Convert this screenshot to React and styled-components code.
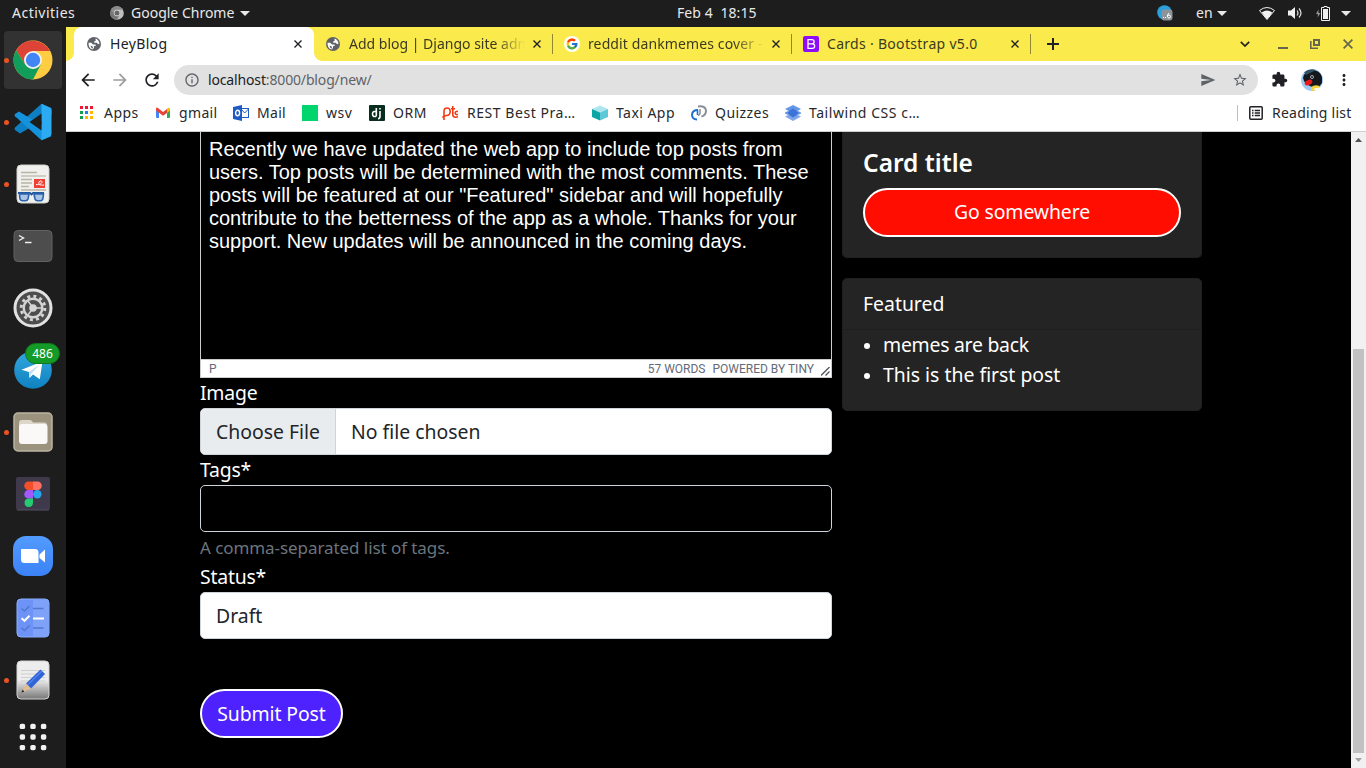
import React from "react";
import styled, { createGlobalStyle, css } from "styled-components";
import {
  MdArrowBack, MdArrowForward, MdRefresh, MdInfoOutline, MdStarBorder, MdExtension,
  MdMoreVert, MdSend,
} from "react-icons/md";
import { FcGoogle } from "react-icons/fc";

const ui = `"Noto Sans", "Open Sans", sans-serif`;

const Global = createGlobalStyle`
  * { box-sizing: border-box; }
  html, body { margin: 0; padding: 0; overflow: hidden; }
  body { font-family: ${ui}; background: #000; }
  svg { display: block; flex: none; }
`;

const Desktop = styled.div`
  width: 1366px;
  height: 768px;
  display: flex;
  flex-direction: column;
  overflow: hidden;
  background: #1d1d1d;
`;

const Text = styled.span`
  white-space: pre;
  letter-spacing: ${(p) => p.$track || 0}px;
`;

/* ---------- system bar ---------- */
const TopBar = styled.header`
  height: 27px;
  flex: none;
  display: grid;
  grid-template-columns: 665px 1fr auto;
  align-items: center;
  padding: 0 15px 1px 12px;
  background: #1d1d1d;
  color: #e9e9e9;
  font-size: 14px;
  line-height: 26px;
`;
const BarLeft = styled.div`
  display: flex;
  align-items: center;
  svg { margin-right: 7px; }
`;
const Activities = styled.span`
  width: 98px;
  letter-spacing: 0.5px;
`;
const AppName = styled.span`
  width: 109px;
  white-space: nowrap;
`;
const Clock = styled.div`
  white-space: pre;
  letter-spacing: 0.1px;
`;
const BarRight = styled.div`
  display: flex;
  align-items: center;
  justify-content: flex-end;
`;
const Slot = styled.span`
  display: flex;
  flex: none;
  width: ${(p) => p.$w}px;
`;
const Caret = () => (
  <svg width="10" height="5" viewBox="0 0 10 5"><path d="M0 0h10L5 5z" fill="#e9e9e9" /></svg>
);

/* ---------- dock ---------- */
const Body = styled.div`
  flex: 1;
  min-height: 0;
  display: flex;
`;
const Dock = styled.nav`
  width: 66px;
  flex: none;
  padding-top: 2px;
  background: #1d1d1d;
`;
const DockItem = styled.div`
  position: relative;
  height: ${(p) => p.$h || 62}px;
  display: flex;
  align-items: center;
  justify-content: center;
`;
const Tile = styled.div`
  width: 58px;
  height: 58px;
  border-radius: 4px;
  display: flex;
  align-items: center;
  justify-content: center;
  background: ${(p) => (p.$active ? "#323232" : "transparent")};
`;
const RunDot = styled.i`
  position: absolute;
  left: 4px;
  top: 29px;
  width: 5px;
  height: 5px;
  border-radius: 50%;
  background: #e95420;
`;
const Badge = styled.span`
  position: absolute;
  left: 25px;
  top: 4px;
  width: 35px;
  height: 21px;
  border-radius: 11px;
  border: 1px solid #0d7a1a;
  background: #149a26;
  color: #fff;
  font-size: 12px;
  line-height: 19px;
  text-align: center;
`;

/* ---------- browser chrome ---------- */
const Browser = styled.main`
  width: 1300px;
  display: flex;
  flex-direction: column;
  background: #fff;
`;
const TabStrip = styled.div`
  height: 34px;
  flex: none;
  display: flex;
  padding-left: 8px;
  background: #fbea4c;
  color: #3c3a20;
`;
const Tab = styled.div`
  position: relative;
  width: 239px;
  height: 34px;
  display: flex;
  align-items: center;
  padding: 0 11px 0 13px;
  font-size: 14px;
  ${(p) => p.$active && css`
    width: 240px;
    margin-right: -1px;
    padding-right: 12px;
    background: #fff;
    color: #202124;
    border-radius: 8px 8px 0 0;
    &::before, &::after {
      content: "";
      position: absolute;
      bottom: 0;
      width: 8px;
      height: 8px;
    }
    &::before { left: -8px; background: radial-gradient(circle at 0 0, transparent 7.5px, #fff 8px); }
    &::after { right: -8px; background: radial-gradient(circle at 100% 0, transparent 7.5px, #fff 8px); }
  `}
  ${(p) => p.$line && css`
    &::after {
      content: "";
      position: absolute;
      right: -1px;
      top: 7px;
      width: 1px;
      height: 20px;
      background: #918834;
    }
  `}
`;
const Favicon = styled.span`
  width: 23px;
  flex: none;
  margin-left: ${(p) => p.$shift || 0}px;
  margin-right: ${(p) => -(p.$shift || 0)}px;
`;
const TabTitle = styled.span`
  width: 176px;
  overflow: hidden;
  white-space: nowrap;
  line-height: 20px;
  letter-spacing: ${(p) => p.$track || 0}px;
  ${(p) => p.$fade && css`mask-image: linear-gradient(90deg, #000 83%, transparent 100%);`}
`;
const CloseSlot = styled.span`
  margin-left: auto;
  color: #202124;
`;
const NewTab = styled.div`
  width: 46px;
  display: flex;
  align-items: center;
  justify-content: center;
  color: #202124;
`;
const WindowButtons = styled.div`
  margin-left: auto;
  display: flex;
  align-items: center;
  padding-right: 13px;
`;

const Toolbar = styled.div`
  height: 37px;
  flex: none;
  display: flex;
  align-items: center;
  padding: 0 12px;
  color: #202124;
`;
const NavButton = styled.span`
  width: 32px;
  display: flex;
  color: ${(p) => (p.$off ? "#9c9c9c" : "#202124")};
`;
const Address = styled.div`
  width: 1084px;
  height: 30px;
  border-radius: 15px;
  display: flex;
  align-items: center;
  padding: 0 10px;
  background: #e1e1e1;
  color: #5f6368;
  font-size: 14px;
  b { font-weight: 400; color: #202124; }
`;
const Url = styled.span`
  margin-left: 8px;
  flex: 1;
  letter-spacing: -0.15px;
`;
const Extensions = styled.div`
  display: flex;
  align-items: center;
  margin-left: 13px;
`;

const Bookmarks = styled.div`
  height: 34px;
  flex: none;
  display: flex;
  align-items: center;
  padding: 0 0 4px 13px;
  border-bottom: 1px solid #cfcfcf;
  color: #27292c;
  font-size: 14px;
  line-height: 19px;
`;
const Bookmark = styled.div`
  width: ${(p) => p.$w}px;
  flex: none;
  display: flex;
  align-items: center;
  white-space: nowrap;
  svg { margin-right: 8px; }
`;
const ReadingList = styled.div`
  margin-left: auto;
  width: 129px;
  height: 16px;
  display: flex;
  align-items: center;
  border-left: 1px solid #bdbdbd;
  padding-left: 11px;
  white-space: nowrap;
  letter-spacing: 0.25px;
  svg { margin-right: 9px; }
`;

/* ---------- page ---------- */
const Viewport = styled.div`
  flex: 1;
  min-height: 0;
  display: flex;
`;
const Page = styled.div`
  width: 1285px;
  padding-left: 134px;
  display: flex;
  align-items: flex-start;
  gap: 10px;
  background: #000;
  color: #fff;
  font-size: 19.4px;
  line-height: 30px;
`;
const Form = styled.form`
  width: 632px;
`;
const Editor = styled.div`
  height: 246px;
  display: flex;
  flex-direction: column;
  border: 1px solid #ccc;
  border-top: 0;
`;
const EditorBody = styled.p`
  flex: 1;
  margin: 0;
  padding: 6px 8px;
  font: 20px/23px "Liberation Sans", Arial, sans-serif;
  white-space: pre;
`;
const StatusBar = styled.div`
  height: 18px;
  position: relative;
  display: flex;
  align-items: center;
  border-top: 1px solid #ccc;
  padding: 1px 17px 0 8px;
  background: #fff;
  color: #646a78;
  font: 12px/16px Roboto, sans-serif;
  text-transform: uppercase;
`;
const WordCount = styled.span`
  margin-left: auto;
  margin-right: 7px;
`;
const Grip = styled.svg`
  position: absolute;
  right: 1px;
  bottom: 1px;
`;
const Label = styled.label`
  display: block;
  height: 30px;
  letter-spacing: -0.2px;
`;
const Field = styled.div`
  height: 47px;
  display: flex;
  align-items: center;
  overflow: hidden;
  border: 1px solid #ced4da;
  border-radius: 5px;
  background: ${(p) => (p.$dark ? "#000" : "#fff")};
  color: #212529;
  padding-left: ${(p) => (p.$flush ? 0 : 15)}px;
`;
const FileButton = styled.span`
  align-self: stretch;
  width: 135px;
  padding-left: 15px;
  line-height: 45px;
  background: #e9ecef;
  border-right: 1px solid #ced4da;
  margin-right: 15px;
  white-space: nowrap;
`;
const Help = styled.div`
  height: 30px;
  padding-top: 1px;
  font-size: 17px;
  letter-spacing: -0.07px;
  color: #6c757d;
`;
const Pill = styled.button`
  display: block;
  width: ${(p) => p.$w};
  height: 49px;
  margin: ${(p) => p.$mt || 0}px 0 0;
  padding: 0 0 ${(p) => p.$lift || 0}px;
  border: 2px solid #fff;
  border-radius: 25px;
  background: ${(p) => p.$bg};
  color: #fff;
  font: 19.4px/43px ${ui};
  letter-spacing: -0.1px;
  white-space: nowrap;
`;
const Sidebar = styled.aside`
  width: 360px;
  display: flex;
  flex-direction: column;
  gap: 20px;
`;
const Card = styled.section`
  border: 1px solid #202020;
  border-radius: 5px;
  background: #242424;
  ${(p) => p.$cut && css`border-top: 0; border-radius: 0 0 5px 5px;`}
`;
const PromoBody = styled.div`
  height: 125px;
  padding: 16px 20px 0;
`;
const CardTitle = styled.h5`
  margin: 0 0 10px;
  font-size: 24.5px;
  line-height: 30px;
  font-weight: 600;
`;
const CardHeader = styled.div`
  height: 51px;
  padding-left: 20px;
  line-height: 50px;
  border-bottom: 1px solid #1e1e1e;
`;
const PostList = styled.ul`
  height: 80px;
  margin: 0;
  padding: 0 0 0 21px;
  list-style: none;
`;
const Post = styled.li`
  display: flex;
  align-items: center;
  height: 30px;
  letter-spacing: ${(p) => p.$track || 0}px;
  &::before {
    content: "";
    width: 6px;
    height: 6px;
    margin-right: 13px;
    margin-top: 2px;
    border-radius: 50%;
    background: #fff;
  }
`;
const Scrollbar = styled.div`
  width: 15px;
  display: flex;
  flex-direction: column;
  align-items: center;
  background: #f1f1f1;
  padding-top: 6px;
`;
const Thumb = styled.div`
  width: 11px;
  height: 404px;
  margin: 207px 0 5px;
  background: #c1c1c1;
`;

/* ---------- drawings ---------- */
const ChromeLogo = ({ s = 40, mono }) => {
  const c = mono ? ["#8a8a8a", "#777", "#bdbdbd", "#666", "#e0e0e0"] : ["#dd4437", "#119e5a", "#ffcd42", "#4285f4", "#f1f1f1"];
  return (
    <svg width={s} height={s} viewBox="0 0 40 40">
      <circle cx="20" cy="20" r="19.5" fill={c[2]} />
      <path d="M3.1 10.3A19.5 19.5 0 0 1 36.9 11H20l-7.8 13.5z" fill={c[0]} />
      <path d="M3.1 10.3A19.5 19.5 0 0 0 20 39.5l7.8-15L20 29l-7.8-4.5z" fill={c[1]} />
      <circle cx="20" cy="20" r="9" fill={c[4]} />
      <circle cx="20" cy="20" r="7.2" fill={c[3]} />
    </svg>
  );
};
const VsCode = () => (
  <svg width="38" height="38" viewBox="0 0 38 38">
    <path d="M27.5 0.8 37.5 5V12L6 30.5 1 27Q0 25.7 1 24.5z" fill="#0f7fc4" />
    <path d="M1 13.3Q0 12 1 11L5 8.5 37 28v5.5L27.5 37.2z" fill="#1592dc" />
    <path d="M27.5 0.8 36 4.8Q37.5 5.5 37.5 7V31Q37.5 32.5 36 33.2L27.5 37.2z" fill="#2cabf2" />
    <path d="M27.5 10.5v17L15.5 19z" fill="#1d1d1d" />
  </svg>
);
const DocViewer = () => (
  <svg width="34" height="40" viewBox="0 0 34 40">
    <rect x="1" y="1" width="32" height="38" rx="4" fill="#f0f0ee" stroke="#d0d0ce" />
    <path d="M5 8.500h16M5 15.500h11M5 19h11M5 22.500h8M5 26h25" stroke="#b9b5a5" strokeWidth="1.400" />
    <path d="M5 12h25" stroke="#b9b5a5" strokeWidth="1.200" />
    <rect x="18" y="15" width="11" height="9" fill="#ee4035" />
    <path d="M20 20.500c5 1 7.500-3 5-3.500s-4.500 5 3 4" stroke="#fff" fill="none" />
    <path d="M2 29h12l1.500 1.500L17 29h11" stroke="#2459a0" strokeWidth="1.800" fill="none" />
    <path d="M3.500 30h9.500l-1 5q-.5 1.700-2.500 1.700H6.500Q4 36.700 3.800 34zM18 30h9.500l-.5 4q-.3 2.700-2.500 2.700H21.500q-2 0-2.500-1.700z" fill="#a9c4e4" stroke="#2b65b0" strokeWidth="1.600" />
  </svg>
);
const Terminal = () => (
  <svg width="40" height="34" viewBox="0 0 40 34">
    <rect x="1" y="1.500" width="38" height="31" rx="4" fill="#4d4d4d" stroke="#626262" />
    <path d="M6 6.500l4.500 2.500L6 11.500M12 13.500h6.500" fill="none" stroke="#f0f0f0" strokeWidth="1.400" />
  </svg>
);
const Settings = () => (
  <svg width="40" height="40" viewBox="0 0 40 40">
    <circle cx="20" cy="20" r="18" fill="#4d4d4d" stroke="#e2e2e2" strokeWidth="3" />
    <circle cx="20" cy="20" r="11.800" fill="none" stroke="#d4d4d4" strokeWidth="3" strokeDasharray="3 3.180" />
    <circle cx="20" cy="20" r="9.300" fill="none" stroke="#d4d4d4" strokeWidth="2.400" />
    <circle cx="20" cy="20" r="3.800" fill="#d4d4d4" />
    <path d="M20 20h9M20 20l-5-7M20 20l-5 7" stroke="#d4d4d4" strokeWidth="1.500" />
  </svg>
);
const Telegram = () => (
  <svg width="38" height="38" viewBox="0 0 38 38">
    <defs><linearGradient id="tg" x2="0" y2="1"><stop stopColor="#35a6de" /><stop offset="1" stopColor="#0e82c0" /></linearGradient></defs>
    <circle cx="19" cy="19" r="18.800" fill="url(#tg)" />
    <path d="M7.500 18.700 28.500 10.500 25.800 28.300 19 23.500 15.500 27 15 21z" fill="#fff" />
    <path d="M15 21 26 13l-8.500 9.500-2 4.500z" fill="#c4dff0" />
  </svg>
);
const Files = () => (
  <svg width="40" height="40" viewBox="0 0 40 40">
    <rect x="1" y="1" width="38" height="38" rx="4" fill="#9c937f" stroke="#bcb5a4" strokeWidth="1.500" />
    <path d="M6 11q0-3 3-3h8q2 0 3 2.500h11q3 0 3 3V20H6z" fill="#dcd6cb" />
    <rect x="6" y="12" width="28.500" height="20" rx="3" fill="#faf9f7" />
  </svg>
);
const Figma = () => (
  <svg width="34" height="36" viewBox="0 0 34 36">
    <rect y="1" width="34" height="33" rx="2" fill="#3e394b" /><path d="M1 34h32" stroke="#555064" />
    <path d="M17 5.500h-4.500a4.200 4.200 0 0 0 0 8.500H17z" fill="#f24e2a" />
    <path d="M17 5.500h4.500a4.200 4.200 0 0 1 0 8.500H17z" fill="#ff7262" />
    <path d="M17 14h-4.500a4.200 4.200 0 0 0 0 8.500H17z" fill="#a259ff" />
    <circle cx="21.300" cy="18.200" r="4.200" fill="#28a5e8" />
    <path d="M17 22.500h-4.500a4.200 4.200 0 1 0 4.500 4.200z" fill="#24cb71" />
  </svg>
);
const Zoom = () => (
  <svg width="40" height="40" viewBox="0 0 40 40">
    <defs><linearGradient id="zm" x2="0" y2="1"><stop stopColor="#529bff" /><stop offset="1" stopColor="#3b82f6" /></linearGradient></defs>
    <rect width="40" height="40" rx="13" fill="url(#zm)" />
    <path d="M8 13h14q3.500 0 3.500 3.500V27H11.500Q8 27 8 23.500zM26.500 18.500 32 13.500V26.500L26.500 22z" fill="#fff" />
  </svg>
);
const Todo = () => (
  <svg width="34" height="40" viewBox="0 0 34 40">
    <rect x="1" y="1" width="32" height="38" rx="4" fill="#6c93f5" stroke="#8db0ff" />
    <path d="M17 1.500h12q3.500 0 3.500 3.500v30q0 3.500-3.500 3.500H17z" fill="#7fa2f8" />
    <path d="M5.500 10.500l3 2.500 5-5M17 10.500h10.500M5.500 30l3 2.500 5-5M17 30h10.500" stroke="#5278cf" strokeWidth="1.500" fill="none" />
    <path d="M5.500 20.300l3 2.500 5-5M17 20.500h11" stroke="#fff" strokeWidth="2" fill="none" />
  </svg>
);
const Notes = () => (
  <svg width="34" height="40" viewBox="0 0 34 40">
    <defs><linearGradient id="nt" x2="0" y2="1"><stop offset=".5" stopColor="#ededed" /><stop offset="1" stopColor="#777" /></linearGradient></defs>
    <rect x="1" y="1" width="32" height="38" rx="4" fill="url(#nt)" stroke="#d5d5d5" />
    <path d="M5 10.500h24M5 14h24M5 17.500h24M5 21h24M5 24.500h24" stroke="#cfcfcf" />
    <path d="M10 23.500 24.500 9.500 29 14 15 28.500z" fill="#2f63d6" /><path d="M11.500 25 26 11" stroke="#5183ee" strokeWidth="1.500" />
    <path d="M10 23.500 15 28.500 5.500 32.500z" fill="#e2bd91" /><path d="M6.800 29.500 8.200 31.500 5.300 32.800z" fill="#222" />
  </svg>
);
const AppGrid = () => (
  <svg width="28" height="28" viewBox="0 0 28 28" fill="#f2f2f2">
    {[0, 10.600, 21.200].map((y) => [0, 10.600, 21.200].map((x) => <rect key={`${x}-${y}`} x={x + 0.700} y={y + 0.700} width="5.400" height="5.400" rx="1.700" />))}
  </svg>
);
const AppsIcon = () => {
  const colors = ["#f01830", "#f01830", "#f01830", "#10a050", "#2080f0", "#ffb800", "#10a050", "#ffb800", "#ffb800"];
  return (
    <svg width="17" height="15" viewBox="0 0 17 15">
      {colors.map((c, i) => <rect key={i} x={1 + (i % 3) * 5} y={1 + Math.floor(i / 3) * 5} width="3" height="3" fill={c} />)}
    </svg>
  );
};
const Gmail = () => (
  <svg width="16" height="14" viewBox="0 0 16 14">
    <path d="M1 3v8q0 1 1 1h2V5z" fill="#4285f4" /><path d="M15 3v8q0 1-1 1h-2V5z" fill="#34a853" />
    <path d="M12 3l1-1q2-1 2 1v1.500L12 7z" fill="#fbbc04" />
    <path d="M1 3q0-2.300 2-1l5 4 4-3v4L8 9.800 1 4.500z" fill="#ea4335" />
  </svg>
);
const Outlook = () => (
  <svg width="16" height="16" viewBox="0 0 16 16">
    <rect x="8" y="3.500" width="7.500" height="9" fill="#fff" stroke="#1c5cc4" /><path d="M8 4l3.700 4 3.800-4" fill="none" stroke="#1c5cc4" />
    <path d="M0 2 9 0v16L0 14z" fill="#1c5cc4" /><ellipse cx="4.600" cy="8" rx="2" ry="2.700" fill="none" stroke="#fff" strokeWidth="1.400" />
  </svg>
);
const GreenSquare = () => <svg width="16" height="16"><rect width="16" height="16" fill="#00d66c" /></svg>;
const Django = () => (
  <svg width="16" height="16" viewBox="0 0 16 16">
    <rect width="16" height="16" rx="1" fill="#092e20" />
    <path d="M7.300 3v8.300M7.300 6.800Q3.500 5.600 3.500 9t3.800 2.300M11 6v5.500q0 2-2 2.200" stroke="#fff" strokeWidth="1.600" fill="none" /><path d="M10.200 3h1.600v1.600h-1.600z" fill="#fff" />
  </svg>
);
const RestIcon = () => (
  <svg width="17" height="16" viewBox="0 0 17 16" fill="none" stroke="#f43a12" strokeWidth="1.600">
    <path d="M2 15V6.500Q2 3 5 3t3.200 3.200Q8.200 10.500 4.500 10.500 2 10.500 0.500 12.500" />
    <path d="M10.800 1v9q.2 2.300 3 2.200l2.200-.4M9 3.800h4M16 6.500q-2.800-.5-2.800 1.500t2.800 1.500" />
  </svg>
);
const Cube = () => (
  <svg width="16" height="16" viewBox="0 0 16 16">
    <path d="M0 4 8 .5 16 4 8 7.500z" fill="#aee6ee" /><path d="M0 4 8 7.500V15.500L0 12z" fill="#0ea5a5" /><path d="M16 4 8 7.500V15.500L16 12z" fill="#5cc9d8" />
  </svg>
);
const Quiz = () => (
  <svg width="16" height="16" viewBox="0 0 16 16" fill="none" strokeWidth="2">
    <path d="M7 1.500q7.500-1 8 4 0 5-4.500 6" stroke="#8a8d96" /><path d="M9 4v4q0 2-2 2.500" stroke="#8a8d96" strokeWidth="1.500" />
    <path d="M7 5Q1.200 5 1 10q.3 4.500 5 4.500" stroke="#1c70d0" /><path d="M6.500 5v5" stroke="#1c70d0" strokeWidth="1.600" />
  </svg>
);
const Layers = () => (
  <svg width="16" height="16" viewBox="0 0 16 16">
    <path d="M0 11.500 8 8l8 3.500L8 16z" fill="#7da5e8" /><path d="M0 4 8 0l8 4-8 4.500z" fill="#6496e8" /><path d="M1 8 8 3.500 15 8 8 12.500z" fill="#3c73d8" />
    <path d="M0 7.500 3 6v4L0 8.500zM16 7.500 13 6v4l3-1.500z" fill="#6496e8" />
  </svg>
);
const ListIcon = () => (
  <svg width="14" height="14" viewBox="0 0 14 14">
    <rect x=".8" y=".8" width="12.400" height="12.400" rx="1" fill="none" stroke="#202124" strokeWidth="1.500" />
    <path d="M3 4.500h1.500M3 7h1.500M3 9.500h1.500M5.700 4.500H11M5.700 7H11M5.700 9.500H11" stroke="#202124" strokeWidth="1.300" />
  </svg>
);
const BootstrapB = () => (
  <svg width="16" height="16" viewBox="0 0 16 16">
    <rect width="16" height="16" rx="2" fill="#8f0cf8" />
    <path d="M5 3.700h3.800q2.300 0 2.300 2T9 7.800H5zM5 7.800h4.200q2.500 0 2.500 2.300T9.200 12.400H5zV3.700" fill="none" stroke="#fff" strokeWidth="1.300" />
  </svg>
);
const Penguin = () => (
  <svg width="22" height="22" viewBox="0 0 22 22">
    <defs><clipPath id="av"><circle cx="11" cy="11" r="11" /></clipPath></defs>
    <g clipPath="url(#av)">
      <rect width="22" height="22" fill="#9ccaf2" /><path d="M2 9Q3 2 11 1q8 0 10 7v6l-3 4h-7Q3 15 2 9z" fill="#14181d" />
      <path d="M3 3q6-4 12-2L5 6z" fill="#35505f" />
      <path d="M10 18q4-3 8.500-1v5h-8z" fill="#f5d63a" /><path d="M13 19.500l6-1v4h-5z" fill="#fff" />
      <ellipse cx="7.500" cy="13.500" rx="4" ry="2.600" transform="rotate(-25 7.500 13.500)" fill="#e81a1a" />
      <circle cx="11" cy="8" r="1.500" fill="#111" stroke="#cdd6dc" strokeWidth=".8" />
    </g>
  </svg>
);
const Globe = () => (
  <svg width="14" height="14" viewBox="0 0 14 14">
    <circle cx="7" cy="7" r="7" fill="#5f6368" />
    <path d="M1.500 5.800h2.700l1.800 1.600h2.200q1 .2.800 1.200l-2 .6v1.700l-1.500 1.700Q1.300 11.500 1.500 5.800zM8.500 1.600Q12 3 12.500 6.500l-1.300.7-1.500-1.400H7.200V4.500L8.700 3.800z" fill="#fff" />
    <path d="M3.500 8.500 6 9.700l-.5 2Q4 11 3.500 8.500z" fill="#5f6368" />
  </svg>
);
const Cross = ({ s = 8, color = "currentColor" }) => (
  <svg width={s} height={s} viewBox="0 0 8 8"><path d="M.5.500l7 7M7.500.5l-7 7" stroke={color} strokeWidth="1.400" /></svg>
);
const Plus = () => (
  <svg width="12" height="12" viewBox="0 0 12 12"><path d="M6 0v12M0 6h12" stroke="currentColor" strokeWidth="2" /></svg>
);

const launchers = [
  { icon: <ChromeLogo />, active: true, running: true },
  { icon: <VsCode />, running: true },
  { icon: <DocViewer />, running: true },
  { icon: <Terminal /> },
  { icon: <Settings /> },
  { icon: <Telegram />, badge: "486" },
  { icon: <Files />, running: true },
  { icon: <Figma /> },
  { icon: <Zoom /> },
  { icon: <Todo /> },
  { icon: <Notes />, running: true },
];

const GoogleDisc = () => (
  <svg width="16" height="16" viewBox="0 0 16 16"><circle cx="8" cy="8" r="8" fill="#fff" /><FcGoogle x="1.500" y="1.500" size={13} /></svg>
);
const tabs = [
  { title: "HeyBlog", icon: <Globe />, active: true, track: 0.35 },
  { title: "Add blog | Django site admin", icon: <Globe />, line: true, fade: true },
  { title: "reddit dankmemes cover - Google", icon: <GoogleDisc />, shift: -1, line: true, fade: true, track: 0.12 },
  { title: "Cards · Bootstrap v5.0", icon: <BootstrapB />, shift: -1, line: true, track: 0.3 },
];
const bookmarks = [
  { text: "Apps", icon: <AppsIcon />, w: 76, track: 0.45 },
  { text: "gmail", icon: <Gmail />, w: 78, track: 0.35 },
  { text: "Mail", icon: <Outlook />, w: 69, track: 0.3 },
  { text: "wsv", icon: <GreenSquare />, w: 67, track: 0.5 },
  { text: "ORM", icon: <Django />, w: 73, track: 0.5 },
  { text: "REST Best Pra…", icon: <RestIcon />, w: 150, track: 0.55 },
  { text: "Taxi App", icon: <Cube />, w: 99, track: 0.45 },
  { text: "Quizzes", icon: <Quiz />, w: 94, track: 0.45 },
  { text: "Tailwind CSS c…", icon: <Layers />, w: 140, track: 0.55 },
];

export default function App() {
  return (
    <Desktop>
      <Global />
      <TopBar>
        <BarLeft>
          <Activities>Activities</Activities>
          <ChromeLogo s={14} mono />
          <AppName>Google Chrome</AppName>
          <Caret />
        </BarLeft>
        <Clock>Feb 4  18:15</Clock>
        <BarRight>
          <Slot $w={39}>
            <svg width="16" height="16" viewBox="0 0 16 16">
              <circle cx="7.500" cy="7.500" r="7.300" fill="#2ba0da" /><rect x="4.500" y="4.500" width="11" height="11" rx="3" fill="#8d9499" />
              <path d="M6 12.500h1M8 12.500h1" stroke="#fff" /><circle cx="12" cy="11.500" r="1.500" fill="none" stroke="#fff" /><path d="M10.500 12V10l1.500-2" stroke="#fff" fill="none" />
            </svg>
          </Slot>
          <Slot $w={21}>en</Slot>
          <Slot $w={42}><Caret /></Slot>
          <Slot $w={29}>
            <svg width="16" height="13" viewBox="0 0 16 13"><path d="M.5 3.500Q8-2.500 15.500 3.500L8 12.500z" fill="none" stroke="#f1f1f1" /><path d="M2.700 5.500Q8 1.500 13.300 5.500L8 12.500z" fill="#f1f1f1" /></svg>
          </Slot>
          <Slot $w={28}>
            <svg width="15" height="14" viewBox="0 0 15 14"><path d="M0 4.500h3L7 1v12L3 9.500H0z" fill="#f1f1f1" /><path d="M9 4.500q2 2.500 0 5M11 2.500q4 4.500 0 9" fill="none" stroke="#e1e1e1" strokeWidth="1.200" /></svg>
          </Slot>
          <Slot $w={25}>
            <svg width="15" height="16" viewBox="0 0 15 16"><path d="M2.500 4.500 0 9h2l-.5 3.500L4.500 8h-2z" fill="#999" /><path d="M5.500 2.500h2.500v-1h3v1h2.500v13h-8z" fill="none" stroke="#f1f1f1" /><path d="M7 4h5v10H7z" fill="#f1f1f1" /></svg>
          </Slot>
          <Caret />
        </BarRight>
      </TopBar>

      <Body>
        <Dock>
          {launchers.map((l, i) => (
            <DockItem key={i}>
              {l.running && <RunDot />}
              <Tile $active={l.active}>{l.icon}</Tile>
              {l.badge && <Badge>{l.badge}</Badge>}
            </DockItem>
          ))}
          <DockItem $h={52}><AppGrid /></DockItem>
        </Dock>

        <Browser>
          <TabStrip>
            {tabs.map((t) => (
              <Tab key={t.title} $active={t.active} $line={t.line}>
                <Favicon $shift={t.shift}>{t.icon}</Favicon>
                <TabTitle $fade={t.fade} $track={t.track}>{t.title}</TabTitle>
                <CloseSlot><Cross /></CloseSlot>
              </Tab>
            ))}
            <NewTab><Plus /></NewTab>
            <WindowButtons>
              <Slot $w={38}><svg width="10" height="6" viewBox="0 0 10 6"><path d="M.8.8 5 5 9.200.8" fill="none" stroke="#202124" strokeWidth="1.700" /></svg></Slot>
              <Slot $w={32}><svg width="10" height="12" viewBox="0 0 10 12"><path d="M0 10h10" stroke="#66664f" strokeWidth="2" /></svg></Slot>
              <Slot $w={33}><svg width="10" height="10" viewBox="0 0 10 10" fill="none" stroke="#66664f"><path d="M4 1h5v5H4z" strokeWidth="2" /><path d="M.8 2v7.200H8" strokeWidth="1.600" /></svg></Slot>
              <Cross s={10} color="#66664f" />
            </WindowButtons>
          </TabStrip>

          <Toolbar>
            <NavButton><MdArrowBack size={20} /></NavButton>
            <NavButton $off><MdArrowForward size={20} /></NavButton>
            <NavButton><MdRefresh size={20} /></NavButton>
            <Address>
              <MdInfoOutline size={16} />
              <Url><b>localhost</b>:8000/blog/new/</Url>
              <Slot $w={32}><MdSend size={16} /></Slot>
              <MdStarBorder size={16} />
            </Address>
            <Extensions>
              <Slot $w={30}><MdExtension size={17} /></Slot>
              <Slot $w={34}><Penguin /></Slot>
              <MdMoreVert size={18} />
            </Extensions>
          </Toolbar>

          <Bookmarks>
            {bookmarks.map((b) => (
              <Bookmark key={b.text} $w={b.w}>{b.icon}<Text $track={b.track}>{b.text}</Text></Bookmark>
            ))}
            <ReadingList><ListIcon />Reading list</ReadingList>
          </Bookmarks>

          <Viewport>
            <Page>
              <Form>
                <Editor>
                  <EditorBody>{`Recently we have updated the web app to include top posts from
users. Top posts will be determined with the most comments. These
posts will be featured at our "Featured" sidebar and will hopefully
contribute to the betterness of the app as a whole. Thanks for your
support. New updates will be announced in the coming days.`}</EditorBody>
                  <StatusBar>
                    <span>p</span>
                    <WordCount>57 words</WordCount>
                    <span>Powered by Tiny</span>
                    <Grip width="9" height="9" viewBox="0 0 9 9"><path d="M0 8.500 8.500 0M4.500 8.500 8.500 4.500" stroke="#50545e" strokeWidth="1.300" /></Grip>
                  </StatusBar>
                </Editor>
                <Label>Image</Label>
                <Field $flush>
                  <FileButton>Choose File</FileButton>
                  <span>No file chosen</span>
                </Field>
                <Label>Tags*</Label>
                <Field $dark />
                <Help>A comma-separated list of tags.</Help>
                <Label>Status*</Label>
                <Field>Draft</Field>
                <Pill type="button" $w="143px" $bg="#4d22ff" $mt={50}>Submit Post</Pill>
              </Form>
              <Sidebar>
                <Card $cut>
                  <PromoBody>
                    <CardTitle>Card title</CardTitle>
                    <Pill type="button" $w="318px" $bg="#ff0d00" $lift={2}>Go somewhere</Pill>
                  </PromoBody>
                </Card>
                <Card>
                  <CardHeader>Featured</CardHeader>
                  <PostList>
                    <Post $track={-0.25}>memes are back</Post>
                    <Post>This is the first post</Post>
                  </PostList>
                </Card>
              </Sidebar>
            </Page>
            <Scrollbar>
              <svg width="7" height="4" viewBox="0 0 7 4"><path d="M3.500 0 7 4H0z" fill="#505050" /></svg>
              <Thumb />
              <svg width="7" height="4" viewBox="0 0 7 4"><path d="M0 0h7L3.500 4z" fill="#a3a3a3" /></svg>
            </Scrollbar>
          </Viewport>
        </Browser>
      </Body>
    </Desktop>
  );
}
